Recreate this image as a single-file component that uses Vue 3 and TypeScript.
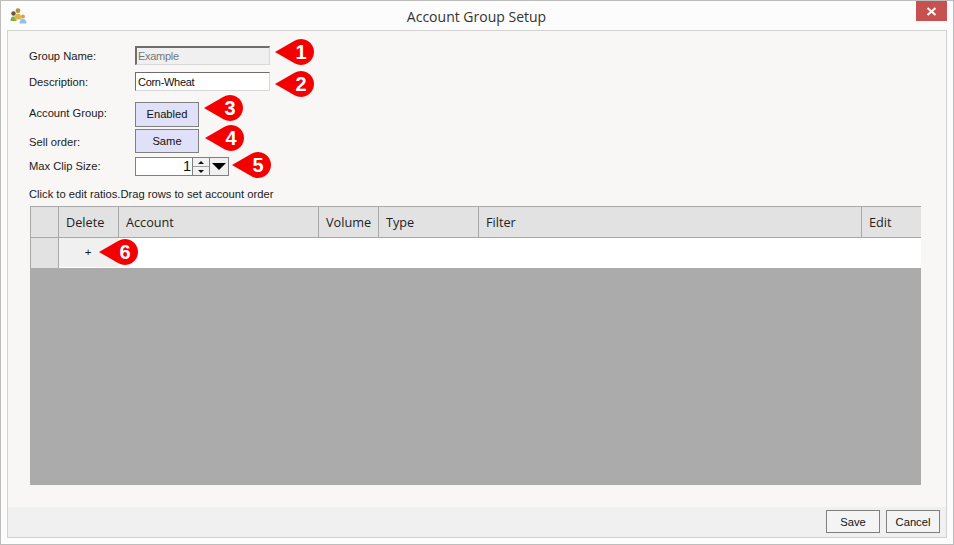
<script setup lang="ts">
interface Col { name: string; width: number }
interface Mark { n: number; left: number; top: number }
const cols: Col[] = [
  { name: '', width: 28 },
  { name: 'Delete', width: 60 },
  { name: 'Account', width: 200 },
  { name: 'Volume', width: 60 },
  { name: 'Type', width: 100 },
  { name: 'Filter', width: 383 },
  { name: 'Edit', width: 60 },
]
const marks: Mark[] = [
  { n: 1, left: 274, top: 38 },
  { n: 2, left: 274, top: 70 },
  { n: 3, left: 203, top: 94 },
  { n: 4, left: 204, top: 124 },
  { n: 5, left: 231, top: 151 },
  { n: 6, left: 98, top: 238 },
]
</script>

<template>
  <div class="window">
    <header class="titlebar">
      <svg class="appicon" width="17" height="16" viewBox="0 0 17 16">
        <circle cx="3.500" cy="5.500" r="2.200" fill="#6b5238" />
        <path d="M0.500 13c0-3 1-4.500 3-4.500s3 1.500 3 4.500z" fill="#7fb23c" />
        <circle cx="13" cy="8.500" r="2" fill="#c9a26a" />
        <path d="M9.500 15.500c0-3 1.500-4.500 3.500-4.500s3.500 1.500 3.500 4.500z" fill="#8fbfe8" />
        <circle cx="8" cy="2.700" r="2.400" fill="#b98f45" />
        <path d="M4.500 11.500c0-4 1.200-6 3.500-6s3.500 2 3.500 6z" fill="#d8b84a" />
      </svg>
      <span class="title">Account Group Setup</span>
      <button class="close" aria-label="Close">
        <svg width="11" height="9" viewBox="0 0 11 9">
          <path d="M1.500 1l8 7M9.500 1l-8 7" stroke="#fff" stroke-width="2" fill="none" />
        </svg>
      </button>
    </header>

    <main class="panel">
      <div class="content">
        <div class="row r1">
          <label>Group Name:</label>
          <input class="field disabled" value="Example" disabled />
        </div>
        <div class="row r2">
          <label>Description:</label>
          <input class="field" value="Corn-Wheat" />
        </div>
        <div class="row r3">
          <label>Account Group:</label>
          <button class="toggle">Enabled</button>
        </div>
        <div class="row r4">
          <label>Sell order:</label>
          <button class="toggle same">Same</button>
        </div>
        <div class="row r5">
          <label>Max Clip Size:</label>
          <div class="spinner">
            <span class="value">1</span>
            <div class="arrows">
              <span class="up"></span>
              <span class="down"></span>
            </div>
            <div class="drop"><span></span></div>
          </div>
        </div>
        <p class="hint">Click to edit ratios.Drag rows to set account order</p>
        <div class="grid">
          <div class="ghead">
            <div v-for="c in cols" :key="c.name" class="hcell" :style="{ width: c.width + 'px' }">{{ c.name }}</div>
          </div>
          <div class="grow">
            <div class="rowhead"></div>
            <div class="addcell">+</div>
          </div>
        </div>
      </div>
      <footer class="footer">
        <button class="btn">Save</button>
        <button class="btn">Cancel</button>
      </footer>
    </main>

    <div v-for="m in marks" :key="m.n" class="mark" :style="{ left: m.left + 'px', top: m.top + 'px' }">
      <svg width="40" height="26" viewBox="0 0 40 26">
        <path d="M0 13 L19.500 1.740 A13 13 0 1 1 19.500 24.260 Z" fill="#f40000" />
      </svg>
      <span>{{ m.n }}</span>
    </div>
  </div>
</template>

<style>
html, body { margin: 0; padding: 0; }
</style>

<style scoped>
.window {
  position: relative;
  box-sizing: border-box;
  width: 954px;
  height: 545px;
  border: 1px solid #bdbdbd;
  background: #fcfcfc;
  padding: 0 6px 6px;
  display: flex;
  flex-direction: column;
  font-family: "Open Sans", "Liberation Sans", sans-serif;
  color: #1a1a1a;
}
.titlebar {
  position: relative;
  height: 29px;
  flex: none;
  display: flex;
  align-items: center;
  justify-content: center;
}
.appicon { position: absolute; left: 3px; top: 7px; }
.title { font-size: 14px; color: #333; position: relative; top: 1px; left: -0.5px; }
.close {
  position: absolute;
  right: 0;
  top: 0;
  width: 31px;
  height: 20px;
  border: 0;
  padding: 0;
  background: #c75050;
  display: flex;
  align-items: center;
  justify-content: center;
}
.panel {
  flex: 1;
  min-height: 0;
  border: 1px solid #d2d2d2;
  background: #f8f7f5;
  display: flex;
  flex-direction: column;
}
.content {
  flex: 1;
  padding: 15px 0 0 21px;
}
.row {
  display: flex;
  align-items: center;
  font-size: 11px;
}
.row label { width: 106px; flex: none; font-family: "Liberation Sans", sans-serif; font-size: 11.200px; }
.r1, .r2, .r5 { height: 19px; }
.r2 { margin-top: 7px; }
.r3 { margin-top: 11px; height: 25px; }
.r4 { margin-top: 2px; height: 24px; }
.r5 { margin-top: 4px; }
.r3 label { padding-bottom: 4px; }
.r4 label { padding-top: 2px; }
.r5 label { padding-bottom: 2px; }
.field {
  box-sizing: border-box;
  width: 135px;
  height: 19px;
  padding: 0 2px;
  border: 1px solid #d8d8d8;
  border-top: 1px solid #6e6e6e;
  border-left: 1px solid #6e6e6e;
  background: #fff;
  font-family: "Liberation Sans", sans-serif;
  font-size: 11px;
  letter-spacing: -0.3px;
  color: #111;
  outline: none;
}
.field.disabled {
  background: #f0f0f0;
  color: #777;
  border-top-width: 2px;
  border-left-width: 2px;
  padding: 0 1px;
}
.toggle {
  box-sizing: border-box;
  width: 64px;
  height: 25px;
  padding: 0 0 2px;
  border: 1px solid #808080;
  background: #e0e0f8;
  font-family: "Liberation Sans", sans-serif;
  font-size: 11.200px;
  color: #111;
}
.toggle.same { height: 24px; padding: 0; }
.spinner {
  box-sizing: border-box;
  width: 94px;
  height: 19px;
  border: 1px solid #808080;
  display: flex;
  background: #fff;
}
.value {
  flex: 1;
  text-align: right;
  font-family: "Liberation Sans", sans-serif;
  font-size: 14.500px;
  line-height: 17px;
  padding-right: 1px;
  color: #111;
}
.arrows {
  box-sizing: border-box;
  width: 17px;
  border-left: 1px solid #808080;
  display: flex;
  flex-direction: column;
  background: #f2f2f2;
}
.arrows span {
  flex: 1;
  display: flex;
  align-items: center;
  justify-content: center;
}
.arrows .up { border-bottom: 1px solid #a0a0a0; }
.up::after {
  content: "";
  border-left: 3px solid transparent;
  border-right: 3px solid transparent;
  border-bottom: 3px solid #111;
}
.down::after {
  content: "";
  border-left: 3px solid transparent;
  border-right: 3px solid transparent;
  border-top: 3px solid #111;
}
.drop {
  box-sizing: border-box;
  width: 19px;
  border-left: 1px solid #808080;
  background: #f0f0f0;
  display: flex;
  align-items: center;
  justify-content: center;
}
.drop span {
  border-left: 7.500px solid transparent;
  border-right: 7.500px solid transparent;
  border-top: 7px solid #000;
}
.hint {
  margin: 11px 0 0;
  height: 19px;
  line-height: 14px;
  font-family: "Liberation Sans", sans-serif;
  font-size: 11.200px;
}
.grid {
  box-sizing: border-box;
  margin-left: 1px;
  width: 891px;
  height: 279px;
  background: #ababab;
  display: flex;
  flex-direction: column;
}
.ghead {
  display: flex;
  height: 31px;
  background: #e2e2e2;
  border-top: 1px solid #a8a8a8;
  box-sizing: border-box;
}
.hcell {
  box-sizing: border-box;
  border-left: 1px solid #a8a8a8;
  padding-left: 7px;
  font-size: 12.700px;
  line-height: 30px;
  color: #222;
}
.grow {
  display: flex;
  height: 31px;
  background: #fff;
  border-top: 1px solid #a8a8a8;
  box-sizing: border-box;
}
.rowhead {
  box-sizing: border-box;
  width: 29px;
  background: #e2e2e2;
  border-left: 1px solid #a8a8a8;
  border-right: 1px solid #a8a8a8;
}
.addcell {
  box-sizing: border-box;
  width: 59px;
  height: 29px;
  padding-right: 1px;
  background: #f0f0f0;
  text-align: center;
  font-family: "Liberation Sans", sans-serif;
  font-size: 11.500px;
  line-height: 29px;
}
.footer {
  height: 30px;
  flex: none;
  background: #f0f0f0;
  display: flex;
  justify-content: flex-end;
  align-items: flex-start;
  gap: 6px;
  padding: 3px 6px 0 0;
  box-sizing: border-box;
}
.btn {
  box-sizing: border-box;
  width: 54px;
  height: 23px;
  padding: 0;
  border: 1px solid #808080;
  background: #f4f4f4;
  font-family: "Liberation Sans", sans-serif;
  font-size: 11.200px;
  color: #111;
}
.mark {
  position: absolute;
  width: 40px;
  height: 26px;
}
.mark svg { display: block; }
.mark span {
  position: absolute;
  left: 14px;
  top: 0;
  width: 24px;
  text-align: center;
  line-height: 26px;
  color: #fff;
  font-family: "Liberation Sans", sans-serif;
  font-weight: 700;
  font-size: 20px;
}
</style>
